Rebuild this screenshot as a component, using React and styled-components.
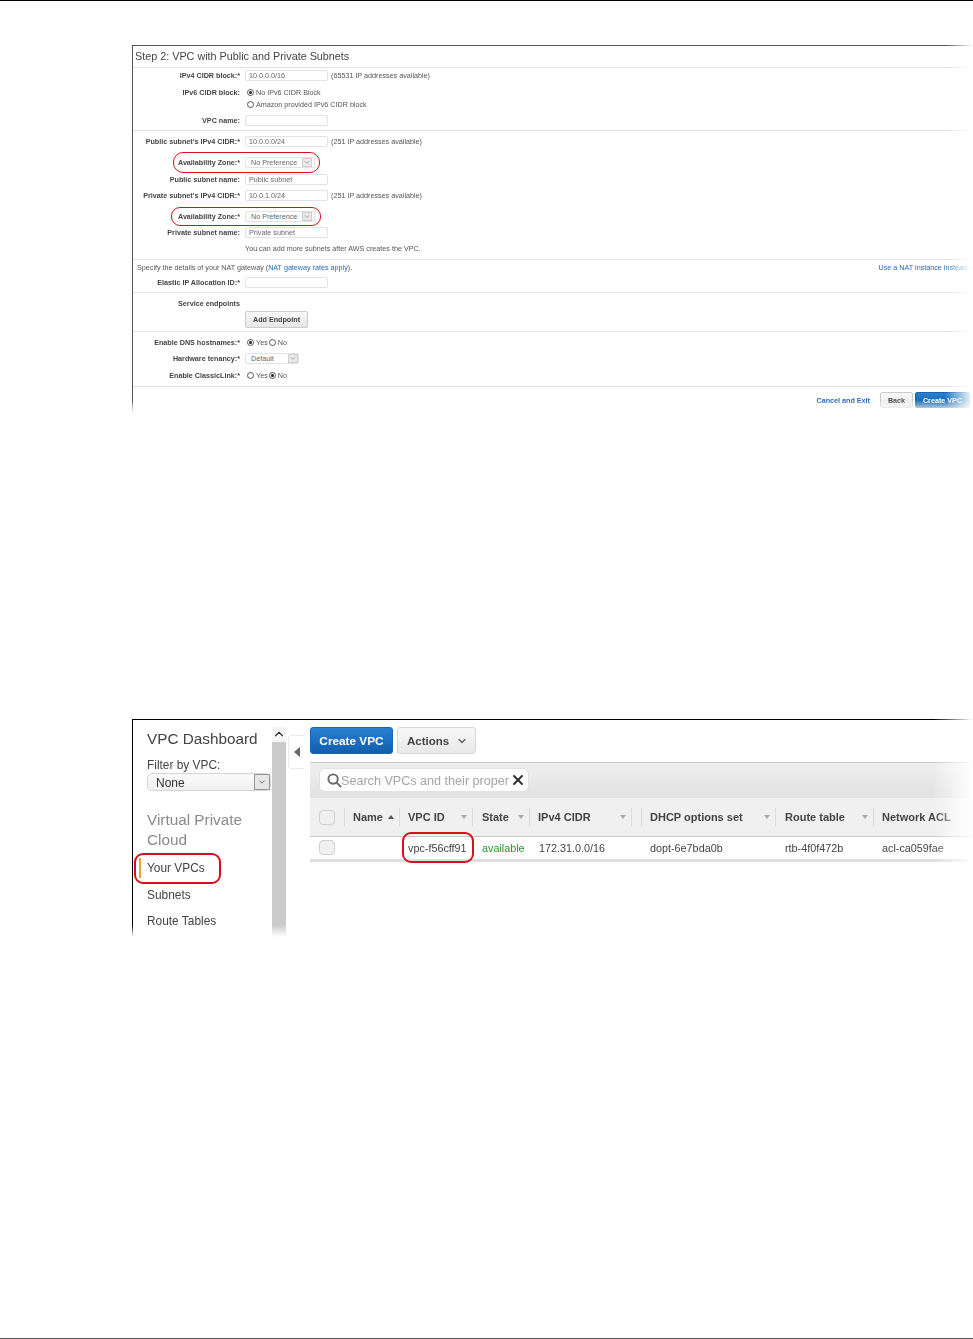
import styled, { createGlobalStyle } from 'styled-components';
import { ChevronDown, X } from 'lucide-react';

const Global = createGlobalStyle`
  html, body { margin: 0; padding: 0; background: #fff; }
  * { box-sizing: border-box; }
`;

const Page = styled.div`
  width: 973px;
  height: 1339px;
  display: flex;
  flex-direction: column;
  align-items: flex-end;
  overflow: hidden;
  font-family: "Liberation Sans", Arial, sans-serif;
  border-top: 1px solid #000;
  border-bottom: 1px solid #555;
`;

const Figure = styled.div`
  position: relative;
  width: 841px;
  height: ${(p) => p.$h}px;
  margin-top: ${(p) => p.$top}px;
  border-top: 1px solid ${(p) => p.$edge};
  border-left: 1px solid ${(p) => p.$edge};
`;

const FormBody = styled.div`
  filter: blur(0.4px);
  color: #444;
`;

const RightFade = styled.div`
  position: absolute;
  top: -1px;
  right: 0;
  bottom: 0;
  width: ${(p) => p.$w}px;
  background: linear-gradient(to right, rgba(255, 255, 255, 0), #fff);
`;

const BottomFade = styled.div`
  position: absolute;
  left: -1px;
  right: 0;
  bottom: 0;
  height: ${(p) => p.$h}px;
  background: linear-gradient(to bottom, rgba(255, 255, 255, 0), #fff);
`;

const Mark = styled.div`
  position: absolute;
  left: ${(p) => p.$x}px;
  top: ${(p) => p.$y}px;
  width: ${(p) => p.$w}px;
  height: ${(p) => p.$h}px;
  border: ${(p) => p.$weight}px solid #d6101c;
  border-radius: ${(p) => p.$r}px;
`;

const Title = styled.div`
  height: 22px;
  padding: 4px 0 0 2px;
  font-size: 10.8px;
  line-height: 13px;
  color: #444;
  border-bottom: 1px solid #e2e2e2;
`;

const Section = styled.div`
  padding-bottom: ${(p) => p.$pad}px;
  border-bottom: 1px solid #e2e2e2;
`;

const Row = styled.div`
  display: grid;
  grid-template-columns: 107px 1fr;
  column-gap: 5px;
  align-items: center;
  height: ${(p) => p.$h || 14}px;
  margin-top: ${(p) => p.$top || 0}px;
`;

const Label = styled.div`
  text-align: right;
  font-size: 7.2px;
  font-weight: 700;
  color: #444;
  white-space: nowrap;
`;

const Value = styled.div`
  display: flex;
  align-items: center;
  font-size: 7.2px;
  color: #555;
`;

const Input = styled.div`
  width: 83px;
  height: 11px;
  margin-right: 3px;
  padding-left: 3px;
  line-height: 10px;
  font-size: 7.2px;
  color: #666;
  background: #fff;
  border: 1px solid #e2e2e2;
  border-radius: 2px;
`;

const SmallSelect = styled(Input)`
  position: relative;
  padding-left: 5px;
  width: ${(p) => p.$w}px;
  svg {
    position: absolute;
    top: 0;
    right: ${(p) => p.$inset}px;
    width: 10px;
    height: 9px;
    color: #777;
    background: #e8e8e8;
    border: 1px solid #d0d0d0;
  }
`;

const Radio = styled.span`
  display: inline-block;
  position: relative;
  width: 7px;
  height: 7px;
  margin: 0 2px 0 ${(p) => p.$left ?? 2}px;
  border: 1px solid #555;
  border-radius: 50%;
  background: #fff;
  &::after {
    content: '';
    display: ${(p) => (p.$on ? 'block' : 'none')};
    position: absolute;
    inset: 1px;
    border-radius: 50%;
    background: #222;
  }
`;

const NoteLine = styled.div`
  display: flex;
  justify-content: space-between;
  height: 14px;
  margin-top: 1px;
  padding: 0 6px 0 4px;
  line-height: 14px;
  font-size: 7.2px;
  color: #555;
`;

const FormLink = styled.span`
  color: #2a6ab0;
`;

const GreyButton = styled.div`
  width: 63px;
  height: 17px;
  line-height: 15px;
  text-align: center;
  font-size: 7.2px;
  font-weight: 700;
  color: #444;
  background: linear-gradient(#fafafa, #e6e6e6);
  border: 1px solid #ccc;
  border-radius: 2px;
`;

const FormFooter = styled.div`
  display: flex;
  justify-content: flex-end;
  align-items: center;
  padding: 5px 3px 0 0;
  font-size: 7.2px;
  font-weight: 700;
`;

const CancelLink = styled.span`
  margin-right: 10px;
  color: #1a62b4;
`;

const BackButton = styled(GreyButton)`
  width: 33px;
  height: 16px;
  margin-right: 2px;
`;

const CreateSmall = styled(GreyButton)`
  width: 55px;
  height: 16px;
  color: #fff;
  background: linear-gradient(#2a7fd0, #0f5ca8);
  border-color: #1a62b4;
`;

const Console = styled.div`
  display: flex;
  height: 100%;
  filter: blur(0.25px);
`;

const Sidebar = styled.div`
  width: 139px;
  padding: 10px 0 0 14px;
`;

const SideTitle = styled.div`
  font-size: 15.3px;
  line-height: 18px;
  color: #444;
`;

const FilterLabel = styled.div`
  margin-top: 9px;
  font-size: 11.9px;
  line-height: 16px;
  color: #444;
`;

const FilterSelect = styled.div`
  position: relative;
  width: 124px;
  height: 18px;
  padding-left: 8px;
  font-size: 12px;
  line-height: 18px;
  color: #333;
  background: linear-gradient(#fafafa, #f0f0f0);
  border: 1px solid #d5d5d5;
  border-radius: 5px;
  svg {
    position: absolute;
    top: 0;
    right: 0;
    width: 16px;
    height: 16px;
    padding: 2px;
    color: #666;
    background: #e6e6e6;
    border: 1px solid #999;
  }
`;

const SideGroup = styled.div`
  margin-top: 19px;
  font-size: 15.3px;
  line-height: 20px;
  color: #8a8a8a;
`;

const NavItem = styled.div`
  height: 20px;
  margin: ${(p) => p.$top}px 0 0 -8px;
  padding-left: 6px;
  font-size: 11.9px;
  line-height: 20px;
  color: #444;
  border-left: 2px solid ${(p) => (p.$active ? '#f0a030' : 'transparent')};
`;

const Scrollbar = styled.div`
  width: 14px;
  margin-top: 7px;
  background: linear-gradient(#f5f5f5 0, #f5f5f5 15px, #cbcbcb 15px);
  text-align: center;
  svg { display: block; width: 14px; height: 14px; color: #333; transform: rotate(180deg); }
`;

const CollapseRail = styled.div`
  width: 24px;
  padding: 15px 0 0 2px;
`;

const CollapseTab = styled.div`
  display: flex;
  align-items: center;
  justify-content: center;
  width: 16px;
  height: 34px;
  border: 1px solid #eaeaea;
  border-right: 0;
  border-radius: 4px 0 0 4px;
  svg { width: 6px; height: 10px; fill: #666; }
`;

const Main = styled.div`
  flex: 1;
  padding-top: 7px;
`;

const Toolbar = styled.div`
  display: flex;
  gap: 4px;
  height: 27px;
`;

const PrimaryButton = styled.div`
  width: 83px;
  text-align: center;
  font-size: 11.8px;
  font-weight: 700;
  line-height: 26px;
  color: #fff;
  background: linear-gradient(#2a7fd0, #105fae);
  border: 1px solid #1a66b3;
  border-radius: 3px;
`;

const ActionsButton = styled.div`
  display: flex;
  align-items: center;
  gap: 7px;
  width: 79px;
  padding-left: 9px;
  font-size: 11.5px;
  font-weight: 700;
  color: #444;
  background: linear-gradient(#f8f8f8, #e8e8e8);
  border: 1px solid #d8d8d8;
  border-radius: 3px;
  svg { width: 12px; height: 12px; color: #666; stroke-width: 3; }
`;

const FilterBand = styled.div`
  height: 36px;
  margin-top: 8px;
  padding: 5px 0 0 9px;
  background: linear-gradient(#eee, #e2e2e2);
  border-top: 1px solid #c8c8c8;
`;

const SearchBox = styled.div`
  display: flex;
  align-items: center;
  width: 210px;
  height: 24px;
  padding-left: 7px;
  background: #fff;
  border: 1px solid #e2e2e2;
  border-radius: 6px;
  svg.glass { flex: none; width: 15px; height: 15px; stroke: #666; fill: none; stroke-width: 2; }
  svg.clear { flex: none; width: 16px; height: 16px; margin-left: 1px; color: #333; stroke-width: 3; }
`;

const SearchText = styled.div`
  width: 168px;
  margin-left: -1px;
  padding-top: 1px;
  white-space: nowrap;
  font-size: 12.6px;
  color: #a5a5a5;
`;

const gridColumns = '34px 55px 73px 57px 102px 10px 134px 98px 1fr';

const HeaderRow = styled.div`
  display: grid;
  grid-template-columns: ${gridColumns};
  align-items: center;
  height: 39px;
  background: #f0f0f0;
  border-bottom: 1px solid #c8c8c8;
`;

const DataRow = styled.div`
  display: grid;
  grid-template-columns: ${gridColumns};
  align-items: center;
  height: 25px;
  padding-bottom: 1px;
  border-bottom: 3px solid #dedede;
`;

const HeadCell = styled.div`
  display: flex;
  align-items: center;
  justify-content: space-between;
  height: 18px;
  padding: 0 ${(p) => p.$end ?? 5}px 0 ${(p) => p.$start ?? 8}px;
  border-left: 1px solid #dcdcdc;
  font-size: 11px;
  font-weight: 700;
  white-space: nowrap;
  color: #444;
`;

const SortArrow = styled.span`
  width: 0;
  height: 0;
  border-left: 3.5px solid transparent;
  border-right: 3.5px solid transparent;
  border-top: ${(p) => (p.$up ? 0 : '4px solid #aaa')};
  border-bottom: ${(p) => (p.$up ? '4px solid #555' : 0)};
`;

const CheckWrap = styled.div`
  padding-left: 9px;
`;

const Check = styled.div`
  width: 16px;
  height: 15px;
  background: #f0f0f0;
  border: 1px solid #d0d0d0;
  border-radius: 4px;
`;

const Cell = styled.div`
  padding-left: ${(p) => p.$start ?? 9}px;
  font-size: 10.8px;
  white-space: nowrap;
  color: ${(p) => p.$color || '#444'};
`;

function App() {
  return (
    <Page>
      <Global />
      <Figure $h={367} $top={44} $edge="#555">
        <FormBody>
          <Title>Step 2: VPC with Public and Private Subnets</Title>
          <Section $pad={3}>
            <Row $h={15}><Label>IPv4 CIDR block:*</Label><Value><Input>10.0.0.0/16</Input>(65531 IP addresses available)</Value></Row>
            <Row $h={12} $top={3}><Label>IPv6 CIDR block:</Label><Value><Radio $on />No IPv6 CIDR Block</Value></Row>
            <Row $h={12}><span /><Value><Radio />Amazon provided IPv6 CIDR block</Value></Row>
            <Row $top={3}><Label>VPC name:</Label><Value><Input /></Value></Row>
          </Section>
          <Section $pad={4}>
            <Row $top={3}><Label>Public subnet's IPv4 CIDR:*</Label><Value><Input>10.0.0.0/24</Input>(251 IP addresses available)</Value></Row>
            <Row $top={7}><Label>Availability Zone:*</Label><Value><SmallSelect $w={70} $inset={2}>No Preference<ChevronDown /></SmallSelect></Value></Row>
            <Row $top={3}><Label>Public subnet name:</Label><Value><Input>Public subnet</Input></Value></Row>
            <Row $top={2}><Label>Private subnet's IPv4 CIDR:*</Label><Value><Input>10.0.1.0/24</Input>(251 IP addresses available)</Value></Row>
            <Row $top={7}><Label>Availability Zone:*</Label><Value><SmallSelect $w={70} $inset={2}>No Preference<ChevronDown /></SmallSelect></Value></Row>
            <Row $top={2}><Label>Private subnet name:</Label><Value><Input>Private subnet</Input></Value></Row>
            <Row $top={2}><span /><Value>You can add more subnets after AWS creates the VPC.</Value></Row>
          </Section>
          <Section $pad={3}>
            <NoteLine>
              <span>Specify the details of your NAT gateway (<FormLink>NAT gateway rates apply</FormLink>).</span>
              <FormLink>Use a NAT instance instead</FormLink>
            </NoteLine>
            <Row><Label>Elastic IP Allocation ID:*</Label><Value><Input /></Value></Row>
          </Section>
          <Section $pad={3}>
            <Row $top={3}><Label>Service endpoints</Label></Row>
            <Row $h={17} $top={1}><span /><Value><GreyButton>Add Endpoint</GreyButton></Value></Row>
          </Section>
          <Section $pad={4}>
            <Row $top={3}><Label>Enable DNS hostnames:*</Label><Value><Radio $on />Yes<Radio $left={1} />No</Value></Row>
            <Row $top={2}><Label>Hardware tenancy:*</Label><Value><SmallSelect $w={54} $inset={0}>Default<ChevronDown /></SmallSelect></Value></Row>
            <Row $top={3}><Label>Enable ClassicLink:*</Label><Value><Radio />Yes<Radio $on $left={1} />No</Value></Row>
          </Section>
          <FormFooter>
            <CancelLink>Cancel and Exit</CancelLink>
            <BackButton>Back</BackButton>
            <CreateSmall>Create VPC</CreateSmall>
          </FormFooter>
        </FormBody>
        <Mark $x={40} $y={106} $w={147} $h={21} $r={10} $weight={1.6} />
        <Mark $x={38} $y={161} $w={150} $h={19} $r={9} $weight={1.6} />
        <RightFade $w={28} />
        <BottomFade $h={12} />
      </Figure>

      <Figure $h={218} $top={307} $edge="#000">
        <Console>
          <Sidebar>
            <SideTitle>VPC Dashboard</SideTitle>
            <FilterLabel>Filter by VPC:</FilterLabel>
            <FilterSelect>None<ChevronDown /></FilterSelect>
            <SideGroup>Virtual Private<br />Cloud</SideGroup>
            <NavItem $active $top={8}>Your VPCs</NavItem>
            <NavItem $top={7}>Subnets</NavItem>
            <NavItem $top={6}>Route Tables</NavItem>
          </Sidebar>
          <Scrollbar><ChevronDown /></Scrollbar>
          <CollapseRail>
            <CollapseTab>
              <svg viewBox="0 0 6 10"><path d="M6 0v10L0 5z" /></svg>
            </CollapseTab>
          </CollapseRail>
          <Main>
            <Toolbar>
              <PrimaryButton>Create VPC</PrimaryButton>
              <ActionsButton>Actions<ChevronDown /></ActionsButton>
            </Toolbar>
            <FilterBand>
              <SearchBox>
                <svg className="glass" viewBox="0 0 16 16"><circle cx="6.5" cy="6.5" r="5" /><path d="M10 10l5 5" /></svg>
                <SearchText>Search VPCs and their proper</SearchText>
                <X className="clear" />
              </SearchBox>
            </FilterBand>
            <HeaderRow>
              <CheckWrap><Check /></CheckWrap>
              <HeadCell>Name<SortArrow $up /></HeadCell>
              <HeadCell>VPC ID<SortArrow /></HeadCell>
              <HeadCell $start={9}>State<SortArrow /></HeadCell>
              <HeadCell>IPv4 CIDR<SortArrow /></HeadCell>
              <HeadCell />
              <HeadCell>DHCP options set<SortArrow /></HeadCell>
              <HeadCell $start={9}>Route table<SortArrow /></HeadCell>
              <HeadCell>Network ACL</HeadCell>
            </HeaderRow>
            <DataRow>
              <CheckWrap><Check /></CheckWrap>
              <Cell />
              <Cell>vpc-f56cff91</Cell>
              <Cell $start={10} $color="#1f9a2e">available</Cell>
              <Cell $start={10}>172.31.0.0/16</Cell>
              <Cell />
              <Cell>dopt-6e7bda0b</Cell>
              <Cell $start={10}>rtb-4f0f472b</Cell>
              <Cell>acl-ca059fae</Cell>
            </DataRow>
          </Main>
        </Console>
        <Mark $x={1} $y={133} $w={87} $h={31} $r={9} $weight={2} />
        <Mark $x={269} $y={112} $w={72} $h={31} $r={9} $weight={2} />
        <RightFade $w={40} />
        <BottomFade $h={12} />
      </Figure>
    </Page>
  );
}

export default App;
